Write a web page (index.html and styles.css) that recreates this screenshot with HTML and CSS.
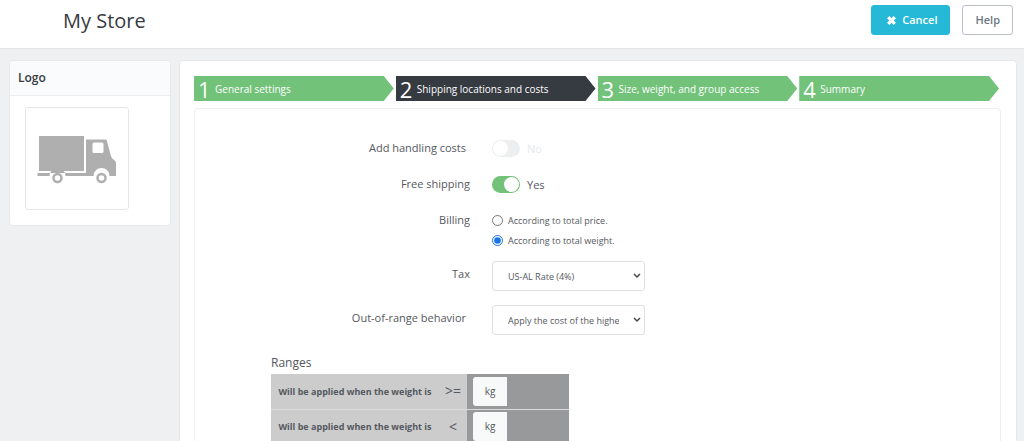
FILE: index.html
```html
<!DOCTYPE html>
<html lang="en">
<head>
<meta charset="utf-8">
<title>My Store</title>
<meta name="viewport" content="width=device-width, initial-scale=1">
<link rel="stylesheet" href="styles.css">
</head>
<body>
<header class="topbar">
  <h1 class="title">My Store</h1>
  <button class="btn btn-primary" type="button">
    <svg class="cross" viewBox="0 0 10 10" aria-hidden="true"><path d="M2 2l6 6M8 2l-6 6"/></svg>
    Cancel
  </button>
  <button class="btn btn-outline" type="button">Help</button>
</header>
<div class="layout">
  <aside class="card logo-card">
    <h2 class="card-heading">Logo</h2>
    <div class="logo-frame">
      <svg class="truck" viewBox="0 0 80 50" role="img" aria-label="Delivery truck">
        <path d="M2 2h45v35H2z"/>
        <path fill-rule="evenodd" d="M49 5.500h19.500q1 0 1.300 1l4 15q.8 3.500 3.500 4.700q1.700.8 1.700 2.800v13H72.500a8 8 0 0 0-16 0H28.500a8 8 0 0 0-16 0H.5v-3H49zM57 8.500q-1.500 0-1.500 1.500v7.500q0 1.500 1.500 1.500h8q1.500 0 1.500-1.500V10q0-1.500-1.500-1.500z"/>
        <circle class="wheel" cx="20.500" cy="44" r="4"/>
        <circle class="wheel" cx="64.500" cy="44" r="4"/>
      </svg>
    </div>
  </aside>
  <main class="card main-card">
    <ol class="steps">
      <li class="step"><a class="step-link" href="#general"><span class="num">1</span>General settings</a></li>
      <li class="step"><a class="step-link current" href="#shipping" aria-current="step"><span class="num">2</span>Shipping locations and costs</a></li>
      <li class="step"><a class="step-link" href="#size"><span class="num">3</span>Size, weight, and group access</a></li>
      <li class="step"><a class="step-link" href="#summary"><span class="num">4</span>Summary</a></li>
    </ol>
    <form class="panel">
      <div class="row">
        <label class="label hinted" for="handling">Add handling costs</label>
        <div class="control switch-row off">
          <input class="switch" type="checkbox" id="handling" disabled>
          <span>No</span>
        </div>
      </div>
      <div class="row">
        <label class="label" for="free">Free shipping</label>
        <div class="control switch-row">
          <input class="switch" type="checkbox" id="free" checked>
          <span>Yes</span>
        </div>
      </div>
      <div class="row" role="radiogroup" aria-labelledby="billing">
        <span class="label" id="billing">Billing</span>
        <div class="control">
          <label class="option"><input class="radio" type="radio" name="billing">According to total price.</label>
          <label class="option"><input class="radio" type="radio" name="billing" checked>According to total weight.</label>
        </div>
      </div>
      <div class="row select-row">
        <label class="label" for="tax">Tax</label>
        <div class="control select-wrap">
          <select class="select" id="tax"><option>US-AL Rate (4%)</option></select>
          <svg class="chevron" viewBox="0 0 8 6" aria-hidden="true"><path d="M1 1l3 3 3-3"/></svg>
        </div>
      </div>
      <div class="row select-row">
        <label class="label hinted" for="range">Out-of-range behavior</label>
        <div class="control select-wrap">
          <select class="select" id="range"><option>Apply the cost of the highest defined range</option></select>
          <svg class="chevron" viewBox="0 0 8 6" aria-hidden="true"><path d="M1 1l3 3 3-3"/></svg>
        </div>
      </div>
      <section class="ranges">
        <h3 class="ranges-title" id="ranges">Ranges</h3>
        <table class="range-table" aria-labelledby="ranges">
          <tr><th class="cond" scope="row">Will be applied when the weight is</th><td class="sign">&gt;=</td><td class="value"><span class="unit">kg</span></td></tr>
          <tr><th class="cond" scope="row">Will be applied when the weight is</th><td class="sign">&lt;</td><td class="value"><span class="unit">kg</span></td></tr>
        </table>
      </section>
    </form>
  </main>
</div>
</body>
</html>
```
FILE: styles.css
```css
* { box-sizing: border-box; }
body {
  margin: 0;
  height: 100vh;
  overflow: hidden;
  background: #eff0f2;
  color: #55585e;
  font-family: "Open Sans", "Noto Sans", sans-serif;
  font-size: 11px;
}
.topbar {
  display: flex;
  align-items: flex-start;
  gap: 12px;
  height: 48px;
  padding: 5px 11px 0 63px;
  background: #fff;
  box-shadow: 0 1px 1px #e4e7e8;
}
.title {
  flex: 1;
  margin: 0;
  color: #363a41;
  font-size: 20px;
  font-weight: 400;
  line-height: 32px;
}
.btn {
  display: flex;
  align-items: center;
  justify-content: center;
  gap: 5px;
  height: 30px;
  padding: 0 12px;
  border: 1px solid #25b9d7;
  border-radius: 3px;
  font: 600 11px/28px "Open Sans", "Noto Sans", sans-serif;
}
.btn-primary { padding: 0 12px 0 14px; background: #25b9d7; color: #fff; }
.btn-outline { border-color: #bbc0c8; background: #fff; color: #6c7885; }
.cross { width: 11px; height: 11px; fill: none; stroke: #fff; stroke-width: 3; }
.layout {
  display: grid;
  grid-template-columns: 162px 1fr;
  align-items: start;
  gap: 8px;
  padding: 12px 7px 0 9px;
}
.card {
  background: #fff;
  border: 1px solid #e6e9ea;
  border-radius: 4px;
}
.logo-card { padding-bottom: 15px; }
.card-heading {
  margin: 0;
  padding: 0 8px;
  border-bottom: 1px solid #eceeef;
  border-radius: 4px 4px 0 0;
  background: #fafbfc;
  color: #363a41;
  font-size: 12px;
  font-weight: 600;
  line-height: 34px;
}
.logo-frame {
  width: 104px;
  height: 103px;
  margin: 11px 0 0 15px;
  padding: 26px 11px;
  border: 1px solid #e4e7e9;
  border-radius: 3px;
}
.truck { display: block; width: 80px; height: 50px; fill: #afafaf; }
.wheel { fill: #fff; stroke: #afafaf; stroke-width: 2.500; }
.main-card { padding: 15px 15px 0 14px; }
.steps {
  display: grid;
  grid-template-columns: repeat(4, 1fr);
  gap: 2px;
  margin: 0 2px 7px 0;
  padding: 0;
  list-style: none;
}
.step-link {
  display: flex;
  align-items: center;
  height: 25px;
  padding-left: 4px;
  background: #72c279;
  clip-path: polygon(0 0, calc(100% - 10px) 0, 100% 50%, calc(100% - 10px) 100%, 0 100%);
  color: #fff;
  font-size: 10px;
  line-height: 24px;
  text-decoration: none;
  white-space: nowrap;
}
.step-link.current { background: #363a41; }
.num { width: 17px; font-size: 22px; line-height: 24px; }
.panel {
  min-height: 400px;
  padding-top: 27px;
  border: 1px solid #eceeef;
  border-radius: 4px;
}
.row {
  display: grid;
  grid-template-columns: 275px 1fr;
  align-items: start;
  gap: 22px;
  margin-bottom: 12px;
}
.label { font-size: 11px; line-height: 24px; text-align: right; }
.hinted { padding-right: 4px; }
.switch-row { display: flex; align-items: center; gap: 7px; height: 24px; font-size: 11px; }
.off { color: #e6e8ea; }
.switch {
  appearance: none;
  display: flex;
  width: 28px;
  height: 17px;
  margin: 0;
  padding: 1px;
  border-radius: 9px;
  background: #eceef0;
}
.switch::before { content: ""; width: 15px; height: 15px; border-radius: 50%; background: #fff; }
.switch:checked { justify-content: flex-end; background: #72c279; }
.control { min-width: 0; }
.option { display: flex; align-items: center; gap: 5px; height: 20px; font-size: 9px; }
.option:first-child { margin-top: 2px; }
.radio { width: 11px; height: 11px; margin: 0; accent-color: #1a73e8; }
.row:has(.radio) { margin-bottom: 11px; }
.select-row { margin-bottom: 14px; }
.select-row .label { line-height: 26px; }
.select-wrap { display: grid; align-items: center; width: 153px; }
.select-wrap > * { grid-area: 1 / 1; }
.select {
  appearance: none;
  width: 100%;
  height: 30px;
  padding: 0 25px 0 15px;
  border: 1px solid #dde1e4;
  border-radius: 3px;
  background: #fff;
  color: #55585e;
  font: 9px "Open Sans", "Noto Sans", sans-serif;
}
.chevron {
  justify-self: end;
  width: 8px;
  height: 6px;
  margin-right: 4px;
  fill: none;
  stroke: #44474c;
  stroke-width: 1.500;
  pointer-events: none;
}
.ranges { padding: 4px 0 20px 76px; }
.ranges-title { margin: 0; font-size: 12px; font-weight: 400; line-height: 20px; }
.range-table { margin-top: 1px; border-collapse: collapse; }
.range-table td, .range-table th { height: 35px; padding: 0; border-bottom: 1px solid #dcdcdc; }
.cond {
  width: 168px;
  background: #ccc;
  font-size: 9px;
  font-weight: 700;
  text-align: center;
  white-space: nowrap;
}
.range-table .sign { width: 28px; background: #ccc; font-size: 14px; line-height: 20px; text-align: center; }
.value { width: 102px; background: #98999b; }
.unit {
  display: block;
  width: 34px;
  margin-left: 6px;
  border-radius: 3px 0 0 3px;
  background: #f8f9f9;
  font-size: 10px;
  line-height: 29px;
  text-align: center;
}
```
